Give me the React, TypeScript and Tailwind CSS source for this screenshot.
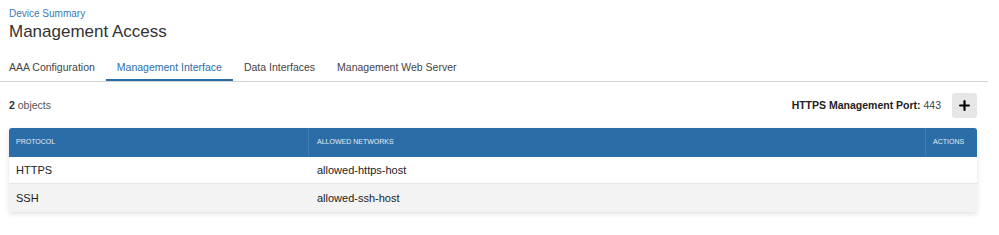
import { Plus } from 'lucide-react';

const tabs = ['AAA Configuration', 'Management Interface', 'Data Interfaces', 'Management Web Server'];

const rows = [
  { protocol: 'HTTPS', networks: 'allowed-https-host' },
  { protocol: 'SSH', networks: 'allowed-ssh-host' },
];

export default function App() {
  return (
    <div className="w-[999px] h-[235px] bg-white font-['Liberation_Sans',Arial,sans-serif] text-[#222]">
      {/* Page header */}
      <div className="px-[9px] pt-[8px]">
        <div className="text-[10px] leading-[12px] text-[#3b7bb5]">Device Summary</div>
        <h1 className="text-[17px] leading-[20px] font-light text-[#333] mt-[2px]">Management Access</h1>
      </div>

      {/* Tabs */}
      <div className="w-[988px] mt-[12px] border-b border-[#d4d4d4] flex">
        <div className="flex -ml-[2px]">
          {tabs.map((t) => {
            const active = t === 'Management Interface';
            return (
              <div
                key={t}
                className={
                  active
                    ? 'px-[11px] h-[27px] flex items-center text-[10.5px] text-[#2b6ea7] border-b-2 border-[#2b6ea7] pt-[2px]'
                    : 'px-[11px] h-[27px] flex items-center text-[10.5px] text-[#444] border-b-2 border-transparent pt-[2px]'
                }
              >
                {t}
              </div>
            );
          })}
        </div>
      </div>

      {/* Toolbar */}
      <div className="w-[977px] pl-[9px] flex items-center justify-between mt-[11px] h-[25px]">
        <div className="text-[10.5px] text-[#555]">
          <span className="font-bold text-[#333]">2</span> objects
        </div>
        <div className="flex items-center">
          <div className="text-[10.5px] text-[#444]">
            <span className="font-bold text-[#222]">HTTPS Management Port:</span> 443
          </div>
          <button className="ml-[11px] w-[25px] h-[25px] rounded-[3px] bg-[#e6e6e6] flex items-center justify-center">
            <Plus className="w-[15px] h-[15px] text-black" strokeWidth={3.5} />
          </button>
        </div>
      </div>

      {/* Table */}
      <div className="ml-[9px] mt-[10px] w-[968px] rounded-t-[3px] shadow-[0_2px_5px_rgba(0,0,0,0.12)]">
        <div className="flex h-[29px] bg-[#2b6ea7] rounded-t-[3px] text-[7px] uppercase text-[#e2ebf4]">
          <div className="w-[300px] pl-[7px] flex items-center border-r border-[#3f7db2]">Protocol</div>
          <div className="flex-1 pl-[8px] flex items-center border-r border-[#3f7db2]">Allowed Networks</div>
          <div className="w-[51px] pl-[7px] flex items-center">Actions</div>
        </div>
        {rows.map((r, i) => (
          <div
            key={r.protocol}
            className={
              i % 2 === 0
                ? 'flex h-[27px] bg-white border-b border-[#e6e6e6] text-[11px]'
                : 'flex h-[28px] bg-[#f3f3f3] text-[11px]'
            }
          >
            <div className="w-[300px] pl-[7px] flex items-center">{r.protocol}</div>
            <div className="flex-1 pl-[8px] flex items-center">{r.networks}</div>
            <div className="w-[51px]"></div>
          </div>
        ))}
      </div>
    </div>
  );
}
